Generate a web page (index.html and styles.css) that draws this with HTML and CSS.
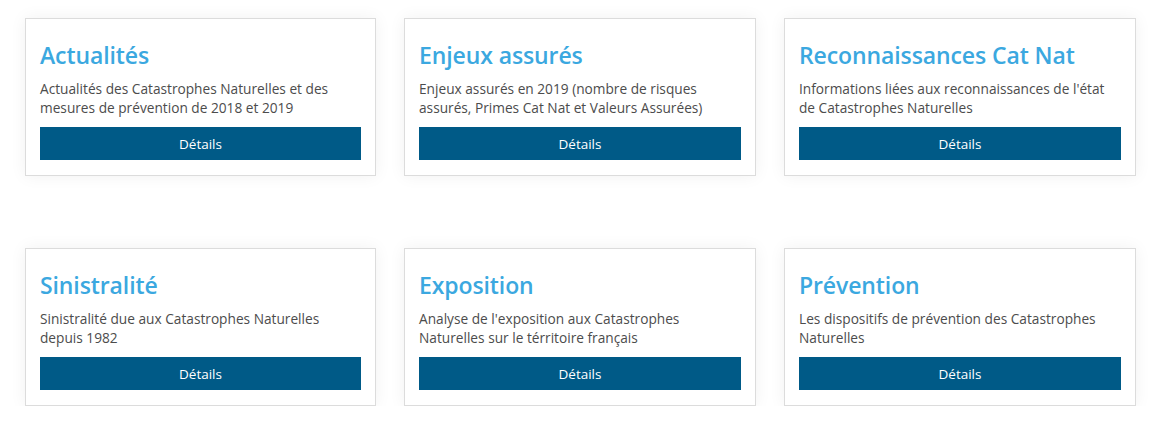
FILE: index.html
```html
<!DOCTYPE html>
<html lang="fr">
<head>
<meta charset="utf-8">
<title>Cat Nat</title>
<link rel="stylesheet" href="styles.css">
</head>
<body>
<main class="grid">
  <section class="card">
    <h2 class="card-title">Actualités</h2>
    <p class="card-text">Actualités des Catastrophes Naturelles et des mesures de prévention de 2018 et 2019</p>
    <a class="card-btn" href="#">Détails</a>
  </section>
  <section class="card">
    <h2 class="card-title">Enjeux assurés</h2>
    <p class="card-text">Enjeux assurés en 2019 (nombre de risques assurés, Primes Cat Nat et Valeurs Assurées)</p>
    <a class="card-btn" href="#">Détails</a>
  </section>
  <section class="card">
    <h2 class="card-title">Reconnaissances Cat Nat</h2>
    <p class="card-text">Informations liées aux reconnaissances de l'état de Catastrophes Naturelles</p>
    <a class="card-btn" href="#">Détails</a>
  </section>
  <section class="card">
    <h2 class="card-title">Sinistralité</h2>
    <p class="card-text">Sinistralité due aux Catastrophes Naturelles depuis 1982</p>
    <a class="card-btn" href="#">Détails</a>
  </section>
  <section class="card">
    <h2 class="card-title">Exposition</h2>
    <p class="card-text">Analyse de l'exposition aux Catastrophes Naturelles sur le térritoire français</p>
    <a class="card-btn" href="#">Détails</a>
  </section>
  <section class="card">
    <h2 class="card-title">Prévention</h2>
    <p class="card-text">Les dispositifs de prévention des Catastrophes Naturelles</p>
    <a class="card-btn" href="#">Détails</a>
  </section>
</main>
</body>
</html>
```

FILE: styles.css
```css
html, body {
  margin: 0;
  padding: 0;
  background: #ffffff;
}
body {
  font-family: "Open Sans", "Lato", sans-serif;
  color: #4c4c4c;
}
.grid {
  display: grid;
  grid-template-columns: 351px 352px 352px;
  column-gap: 28px;
  row-gap: 72px;
  margin: 18px 0 0 25px;
}
.card {
  box-sizing: border-box;
  height: 158px;
  border: 1px solid #dcdcdc;
  background: #fff;
  box-shadow: 0 0 16px rgba(0, 0, 0, 0.06);
  padding: 22px 14px 15px 14px;
  display: flex;
  flex-direction: column;
}
.card-title {
  margin: 0;
  font-size: 23px;
  font-weight: 600;
  line-height: 28px;
  letter-spacing: -0.1px;
  color: #3ba8e0;
}
.card-text {
  margin: 10px 6px 0 0;
  font-size: 13.7px;
  line-height: 19px;
  color: #4c4c4c;
}
.card-btn {
  margin-top: auto;
  display: flex;
  align-items: center;
  justify-content: center;
  height: 33px;
  background: #005a87;
  color: #ffffff;
  text-decoration: none;
  font-size: 13.5px;
}
```
